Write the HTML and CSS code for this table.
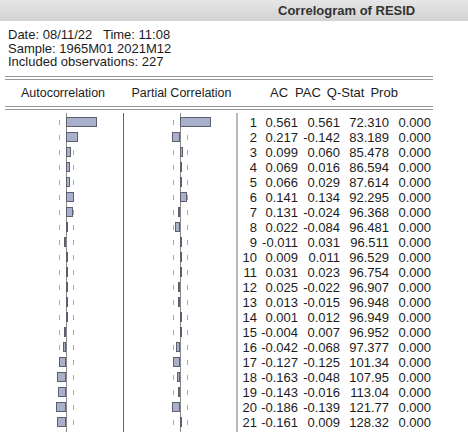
FILE: index.html
```html
<!DOCTYPE html>
<html>
<head>
<meta charset="utf-8">
<link rel="stylesheet" href="styles.css">
</head>
<body>
<div class="titlebar"><span class="title">Correlogram of RESID</span></div>
<div class="info">
<div class="line">Date: 08/11/22   Time: 11:08</div>
<div class="line">Sample: 1965M01 2021M12</div>
<div class="line">Included observations: 227</div>
</div>
<div class="rule"></div>
<div class="head">
<div class="h-ac">Autocorrelation</div>
<div class="h-pac">Partial Correlation</div>
<div class="h-nums"><span class="hl-ac">AC</span><span class="hl-pac">PAC</span><span class="hl-q">Q-Stat</span><span class="hl-p">Prob</span></div>
</div>
<div class="rule"></div>
<div class="body">
<div class="panel ac-panel">
<div class="row"><div class="neg"></div><div class="pos"><i class="bar" style="width:31px"></i></div></div>
<div class="row"><div class="neg"></div><div class="pos"><i class="bar" style="width:12px"></i></div></div>
<div class="row"><div class="neg"></div><div class="pos"><i class="bar" style="width:5px"></i></div></div>
<div class="row"><div class="neg"></div><div class="pos"><i class="bar" style="width:4px"></i></div></div>
<div class="row"><div class="neg"></div><div class="pos"><i class="bar" style="width:4px"></i></div></div>
<div class="row"><div class="neg"></div><div class="pos"><i class="bar" style="width:8px"></i></div></div>
<div class="row"><div class="neg"></div><div class="pos"><i class="bar" style="width:7px"></i></div></div>
<div class="row"><div class="neg"></div><div class="pos"><i class="bar" style="width:1px"></i></div></div>
<div class="row"><div class="neg"><i class="bar" style="width:1px"></i></div><div class="pos"></div></div>
<div class="row"><div class="neg"></div><div class="pos"><i class="bar" style="width:1px"></i></div></div>
<div class="row"><div class="neg"></div><div class="pos"><i class="bar" style="width:2px"></i></div></div>
<div class="row"><div class="neg"></div><div class="pos"><i class="bar" style="width:1px"></i></div></div>
<div class="row"><div class="neg"></div><div class="pos"><i class="bar" style="width:1px"></i></div></div>
<div class="row"><div class="neg"></div><div class="pos"><i class="bar" style="width:1px"></i></div></div>
<div class="row"><div class="neg"><i class="bar" style="width:1px"></i></div><div class="pos"></div></div>
<div class="row"><div class="neg"><i class="bar" style="width:3px"></i></div><div class="pos"></div></div>
<div class="row"><div class="neg"><i class="bar" style="width:7px"></i></div><div class="pos"></div></div>
<div class="row"><div class="neg"><i class="bar" style="width:9px"></i></div><div class="pos"></div></div>
<div class="row"><div class="neg"><i class="bar" style="width:8px"></i></div><div class="pos"></div></div>
<div class="row"><div class="neg"><i class="bar" style="width:10px"></i></div><div class="pos"></div></div>
<div class="row"><div class="neg"><i class="bar" style="width:9px"></i></div><div class="pos"></div></div>
</div>
<div class="panel pac-panel">
<div class="row"><div class="neg"></div><div class="pos"><i class="bar" style="width:31px"></i></div></div>
<div class="row"><div class="neg"><i class="bar" style="width:8px"></i></div><div class="pos"></div></div>
<div class="row"><div class="neg"></div><div class="pos"><i class="bar" style="width:3px"></i></div></div>
<div class="row"><div class="neg"></div><div class="pos"><i class="bar" style="width:1px"></i></div></div>
<div class="row"><div class="neg"></div><div class="pos"><i class="bar" style="width:2px"></i></div></div>
<div class="row"><div class="neg"></div><div class="pos"><i class="bar" style="width:7px"></i></div></div>
<div class="row"><div class="neg"><i class="bar" style="width:1px"></i></div><div class="pos"></div></div>
<div class="row"><div class="neg"><i class="bar" style="width:5px"></i></div><div class="pos"></div></div>
<div class="row"><div class="neg"></div><div class="pos"><i class="bar" style="width:2px"></i></div></div>
<div class="row"><div class="neg"></div><div class="pos"><i class="bar" style="width:1px"></i></div></div>
<div class="row"><div class="neg"></div><div class="pos"><i class="bar" style="width:1px"></i></div></div>
<div class="row"><div class="neg"><i class="bar" style="width:1px"></i></div><div class="pos"></div></div>
<div class="row"><div class="neg"><i class="bar" style="width:1px"></i></div><div class="pos"></div></div>
<div class="row"><div class="neg"></div><div class="pos"><i class="bar" style="width:1px"></i></div></div>
<div class="row"><div class="neg"></div><div class="pos"><i class="bar" style="width:1px"></i></div></div>
<div class="row"><div class="neg"><i class="bar" style="width:4px"></i></div><div class="pos"></div></div>
<div class="row"><div class="neg"><i class="bar" style="width:7px"></i></div><div class="pos"></div></div>
<div class="row"><div class="neg"><i class="bar" style="width:3px"></i></div><div class="pos"></div></div>
<div class="row"><div class="neg"><i class="bar" style="width:1px"></i></div><div class="pos"></div></div>
<div class="row"><div class="neg"><i class="bar" style="width:8px"></i></div><div class="pos"></div></div>
<div class="row"><div class="neg"></div><div class="pos"><i class="bar" style="width:1px"></i></div></div>
</div>
<div class="nums">
<span>1</span><span>0.561</span><span>0.561</span><span>72.310</span><span>0.000</span>
<span>2</span><span>0.217</span><span>-0.142</span><span>83.189</span><span>0.000</span>
<span>3</span><span>0.099</span><span>0.060</span><span>85.478</span><span>0.000</span>
<span>4</span><span>0.069</span><span>0.016</span><span>86.594</span><span>0.000</span>
<span>5</span><span>0.066</span><span>0.029</span><span>87.614</span><span>0.000</span>
<span>6</span><span>0.141</span><span>0.134</span><span>92.295</span><span>0.000</span>
<span>7</span><span>0.131</span><span>-0.024</span><span>96.368</span><span>0.000</span>
<span>8</span><span>0.022</span><span>-0.084</span><span>96.481</span><span>0.000</span>
<span>9</span><span>-0.011</span><span>0.031</span><span>96.511</span><span>0.000</span>
<span>10</span><span>0.009</span><span>0.011</span><span>96.529</span><span>0.000</span>
<span>11</span><span>0.031</span><span>0.023</span><span>96.754</span><span>0.000</span>
<span>12</span><span>0.025</span><span>-0.022</span><span>96.907</span><span>0.000</span>
<span>13</span><span>0.013</span><span>-0.015</span><span>96.948</span><span>0.000</span>
<span>14</span><span>0.001</span><span>0.012</span><span>96.949</span><span>0.000</span>
<span>15</span><span>-0.004</span><span>0.007</span><span>96.952</span><span>0.000</span>
<span>16</span><span>-0.042</span><span>-0.068</span><span>97.377</span><span>0.000</span>
<span>17</span><span>-0.127</span><span>-0.125</span><span>101.34</span><span>0.000</span>
<span>18</span><span>-0.163</span><span>-0.048</span><span>107.95</span><span>0.000</span>
<span>19</span><span>-0.143</span><span>-0.016</span><span>113.04</span><span>0.000</span>
<span>20</span><span>-0.186</span><span>-0.139</span><span>121.77</span><span>0.000</span>
<span>21</span><span>-0.161</span><span>0.009</span><span>128.32</span><span>0.000</span>
</div>
</div>
</body>
</html>
```

FILE: styles.css
```css
* { box-sizing: border-box; }
html, body { margin: 0; padding: 0; background: #fff; }
body {
  font-family: "Liberation Sans", Arial, sans-serif;
  font-size: 13px;
  color: #1c1c1c;
  width: 468px;
  height: 443px;
  overflow: hidden;
}
.titlebar {
  height: 21px;
  background: linear-gradient(#e6e6e6, #d2d2d2);
  display: flex;
  align-items: center;
  padding-left: 278px;
}
.title {
  font-weight: bold;
  font-size: 13px;
  color: #333;
}
.info {
  padding: 7px 0 0 8px;
  font-size: 13px;
  line-height: 13.5px;
}
.info .line { white-space: pre; }
.rule {
  margin-left: 5px;
  width: 428px;
  height: 4px;
  border-top: 1px solid #999;
  border-bottom: 1px solid #999;
}
.info + .rule { margin-top: 7px; }
.head {
  height: 26px;
  display: flex;
  align-items: center;
  font-size: 12.5px;
}
.h-ac { width: 123px; text-align: center; padding-left: 3px; }
.h-pac { width: 114px; text-align: center; padding-left: 3px; }
.h-nums { display: flex; padding-left: 33px; font-size: 13px; }
.hl-pac { margin-left: 7px; }
.hl-q { margin-left: 6px; }
.hl-p { margin-left: 6px; }
.body {
  display: flex;
  margin-top: 3px;
}
.panel {
  padding: 2px 0;
}
.ac-panel {
  width: 124px;
  border-right: 1px solid #666;
  background: linear-gradient(#888, #888) 66px 0 / 1px 100% no-repeat;
}
.pac-panel {
  width: 114px;
  border-right: 2px solid #b9b9b9;
  background: linear-gradient(#888, #888) 56px 0 / 1px 100% no-repeat;
}
.row {
  height: 15px;
  display: flex;
}
.ac-panel .row {
  background:
    linear-gradient(#aaa, #aaa) 59px 5px / 1px 5px no-repeat,
    linear-gradient(#aaa, #aaa) 73px 5px / 1px 5px no-repeat;
}
.pac-panel .row {
  background:
    linear-gradient(#aaa, #aaa) 49px 5px / 1px 5px no-repeat,
    linear-gradient(#aaa, #aaa) 63px 5px / 1px 5px no-repeat;
}
.neg {
  display: flex;
  justify-content: flex-end;
  align-items: center;
}
.ac-panel .neg { width: 66px; }
.pac-panel .neg { width: 56px; }
.pos {
  flex: 1;
  display: flex;
  align-items: center;
}
.bar {
  display: block;
  height: 10px;
  min-width: 1px;
  background: #a9b0cc;
  border: 1px solid #5c5f6e;
}
.nums {
  margin-top: 2px;
  display: grid;
  grid-template-columns: 19px 41px 42px 49px 42px;
  grid-auto-rows: 15px;
  line-height: 15px;
  text-align: right;
}
```
